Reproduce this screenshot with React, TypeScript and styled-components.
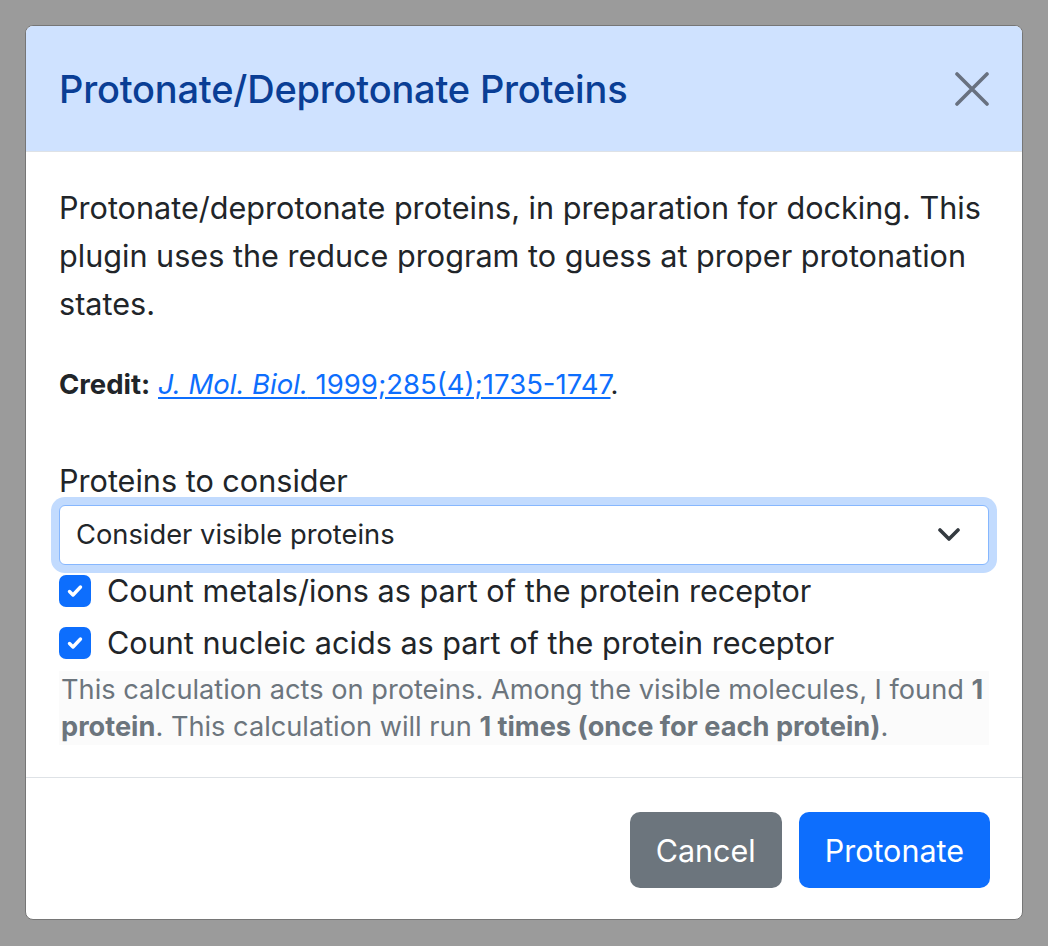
import React from "react";
import styled, { createGlobalStyle } from "styled-components";

const Global = createGlobalStyle`
  html, body { margin: 0; padding: 0; }
  body {
    background: #9b9b9b;
    font-family: Inter, "Noto Sans", "Liberation Sans", sans-serif;
    color: #212529;
  }
  * { box-sizing: border-box; }
`;

const Backdrop = styled.div`
  width: 1048px;
  height: 946px;
  padding: 25px 25px 0 25px;
`;

const Modal = styled.div`
  width: 998px;
  background: #fff;
  border: 1px solid #767676;
  border-radius: 8px;
  overflow: hidden;
  display: flex;
  flex-direction: column;
`;

const Header = styled.div`
  background: #cfe2ff;
  border-bottom: 1px solid #dee2e6;
  padding: 32px 33px;
  display: flex;
  align-items: center;
  justify-content: space-between;
  height: 126px;
`;

const Title = styled.h5`
  margin: 0;
  font-size: 38px;
  line-height: 60px;
  font-weight: 500;
  color: #0a3e95;
  letter-spacing: -0.2px;
`;

const CloseButton = styled.button`
  border: 0;
  background: transparent;
  padding: 0;
  width: 40px;
  height: 40px;
  display: flex;
  align-items: center;
  justify-content: center;
  margin-right: -3px;
  cursor: pointer;
`;

const Body = styled.div`
  padding: 32px 33px 32px 33px;
  font-size: 30.6px;
  line-height: 48px;
`;

const Para = styled.p`
  margin: 0 0 32px 0;
`;

const Credit = styled.p`
  margin: 0;
  font-size: 27.5px;
  line-height: 48px;
`;

const Link = styled.a`
  color: #0d6efd;
  text-decoration: underline;
  text-underline-offset: 3px;
`;

const Label = styled.label`
  display: block;
  margin-top: 49px;
  font-size: 30.6px;
  line-height: 48px;
`;

const SelectBox = styled.div`
  position: relative;
  height: 60px;
  border: 1px solid #86b7fe;
  border-radius: 6px;
  box-shadow: 0 0 0 8px rgba(13, 110, 253, 0.25);
  display: flex;
  align-items: center;
  padding: 0 16px;
  font-size: 27.3px;
  background: #fff;
`;

const Chevron = styled.svg`
  position: absolute;
  right: 28px;
  top: 50%;
  margin-top: -7px;
`;

const Check = styled.div<{ $first?: boolean }>`
  display: flex;
  align-items: center;
  gap: 16px;
  height: 48px;
  margin-top: ${(p) => (p.$first ? "2px" : "4px")};
  font-size: 30.6px;
`;

const Box = styled.span`
  width: 32px;
  height: 32px;
  border-radius: 7px;
  background: #0d6efd;
  display: flex;
  align-items: center;
  justify-content: center;
  flex: none;
`;

const Help = styled.div`
  margin-top: 4px;
  background: #fbfbfb;
  color: #6c757d;
  font-size: 27.2px;
  line-height: 37px;
  padding-left: 2px;
  b { font-weight: 700; }
`;

const Footer = styled.div`
  border-top: 1px solid #dee2e6;
  padding: 34px 32px 31px;
  display: flex;
  justify-content: flex-end;
  gap: 17px;
`;

const Button = styled.button<{ $variant: "secondary" | "primary" }>`
  height: 76px;
  border: 0;
  border-radius: 10px;
  padding: 0 26px;
  font-family: inherit;
  font-size: 30.5px;
  color: #fff;
  background: ${(p) => (p.$variant === "primary" ? "#0d6efd" : "#6c757d")};
  cursor: pointer;
`;

const CheckIcon = () => (
  <svg width="20" height="20" viewBox="0 0 20 20">
    <path d="M4.5 10.5l3.5 3.5 7.5-8" fill="none" stroke="#fff" strokeWidth="3.4" strokeLinecap="round" strokeLinejoin="round" />
  </svg>
);

export default function App() {
  return (
    <>
      <Global />
      <Backdrop>
        <Modal>
          <Header>
            <Title>Protonate/Deprotonate Proteins</Title>
            <CloseButton aria-label="Close">
              <svg width="34" height="34" viewBox="0 0 34 34">
                <path d="M2 2L32 32M32 2L2 32" stroke="#687180" strokeWidth="3.6" strokeLinecap="round" />
              </svg>
            </CloseButton>
          </Header>
          <Body>
            <Para>
              Protonate/deprotonate proteins, in preparation for docking. This plugin uses the reduce program to
              guess at proper protonation states.
            </Para>
            <Credit>
              <b>Credit:</b>{" "}
              <Link href="#">
                <i>J. Mol. Biol.</i> 1999;285(4);1735-1747
              </Link>
              .
            </Credit>
            <Label>Proteins to consider</Label>
            <SelectBox>
              Consider visible proteins
              <Chevron width="22" height="14" viewBox="0 0 22 14">
                <path d="M2 2l9 9 9-9" fill="none" stroke="#343a40" strokeWidth="3.6" strokeLinecap="round" strokeLinejoin="round" />
              </Chevron>
            </SelectBox>
            <Check $first>
              <Box>
                <CheckIcon />
              </Box>
              Count metals/ions as part of the protein receptor
            </Check>
            <Check>
              <Box>
                <CheckIcon />
              </Box>
              Count nucleic acids as part of the protein receptor
            </Check>
            <Help>
              This calculation acts on proteins. Among the visible molecules, I found <b>1 protein</b>. This
              calculation will run <b>1 times (once for each protein)</b>.
            </Help>
          </Body>
          <Footer>
            <Button $variant="secondary">Cancel</Button>
            <Button $variant="primary">Protonate</Button>
          </Footer>
        </Modal>
      </Backdrop>
    </>
  );
}
